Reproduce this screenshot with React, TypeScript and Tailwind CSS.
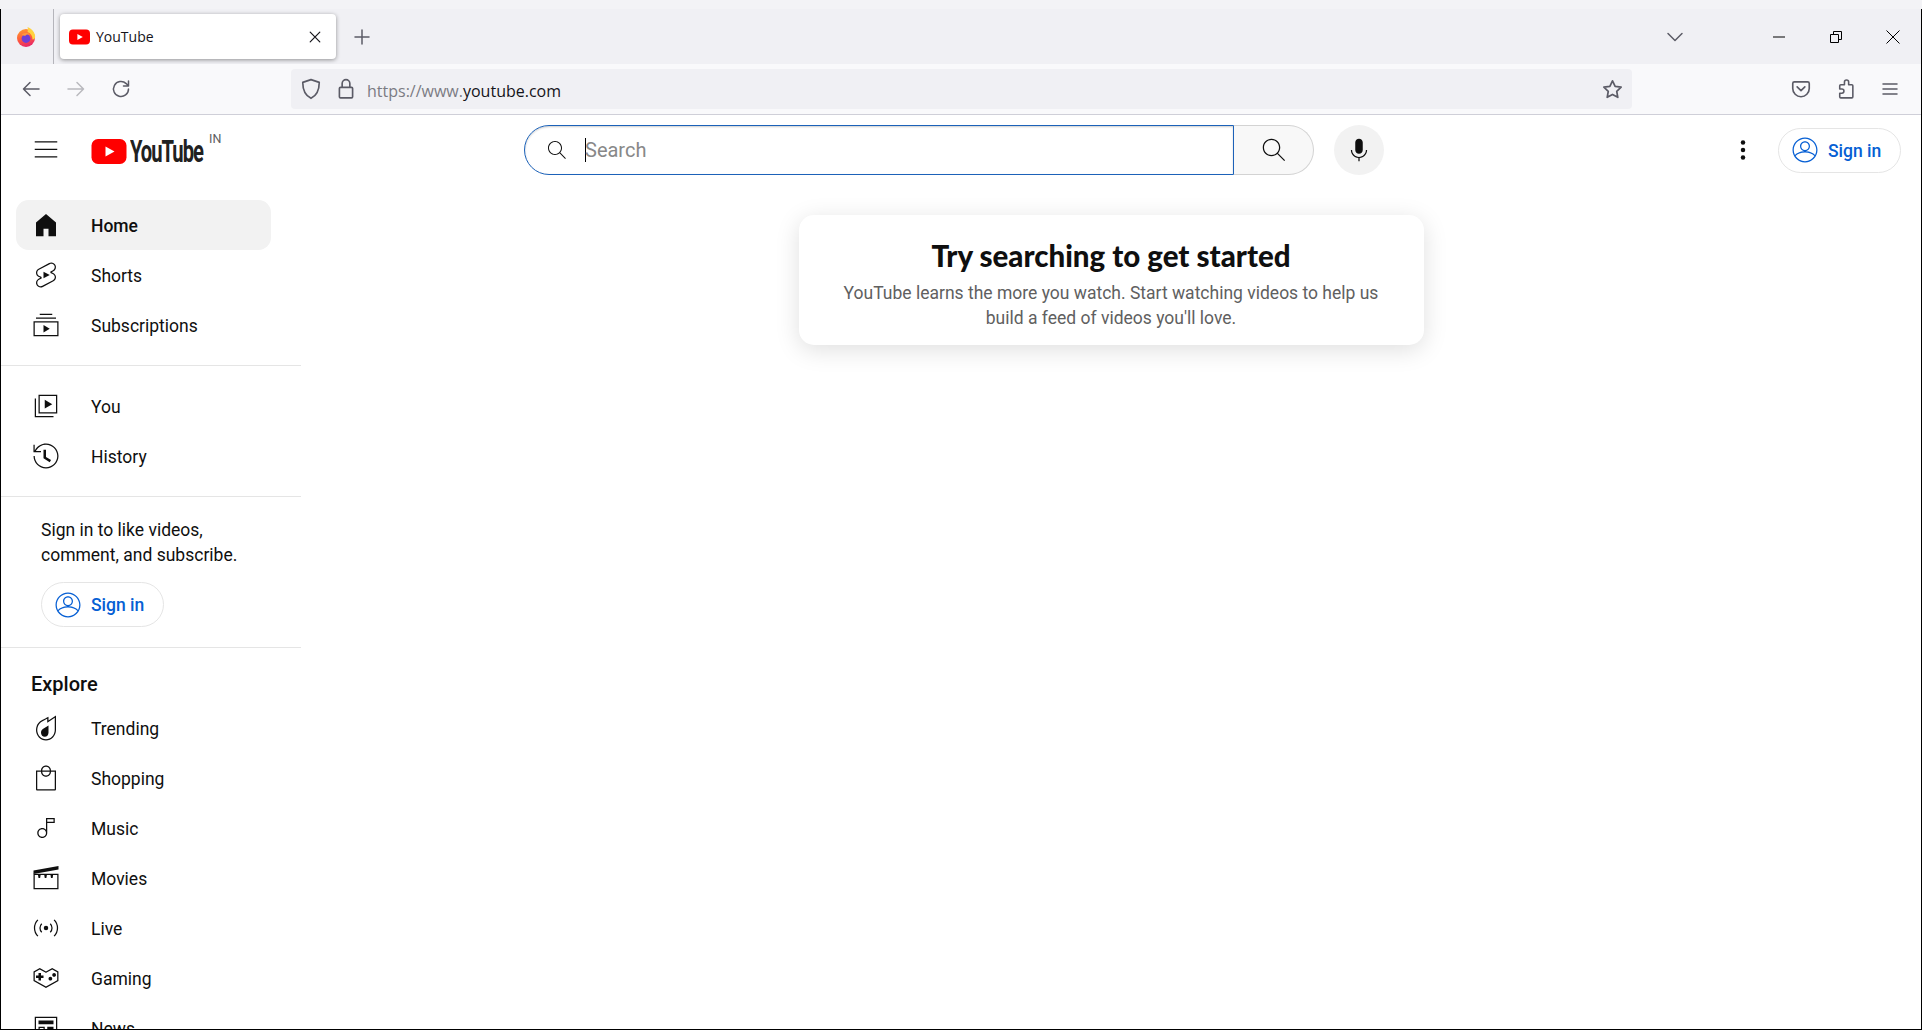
import React from "react";

const P: Record<string, string> = {
  menu: "M21 6H3V5h18v1zm0 5H3v1h18v-1zm0 6H3v1h18v-1z",
  home: "M4 21V10.08l8-6.96 8 6.96V21h-6v-6h-4v6H4z",
  shorts:
    "M10 14.65v-5.3L15 12l-5 2.65zm7.77-4.33-1.2-.5L18 9.06c1.84-.96 2.53-3.23 1.56-5.06s-3.24-2.53-5.07-1.56L6 6.94c-1.29.68-2.07 2.04-2 3.49.07 1.42.93 2.67 2.22 3.25.03.01 1.2.5 1.2.5L6 14.93c-1.83.97-2.53 3.24-1.56 5.07.97 1.83 3.24 2.53 5.07 1.56l8.5-4.5c1.29-.68 2.06-2.04 1.99-3.49-.07-1.42-.94-2.68-2.23-3.25zm-.23 5.86-8.5 4.5c-1.34.71-3.01.2-3.72-1.14-.71-1.34-.2-3.01 1.14-3.72l2.04-1.08v-1.21l-.69-.28-1.11-.46c-.99-.41-1.65-1.35-1.7-2.41-.05-1.06.52-2.06 1.46-2.56l8.5-4.5c1.34-.71 3.01-.2 3.72 1.14.71 1.34.2 3.01-1.14 3.72L15.5 9.26v1.21l1.8.74c.99.41 1.65 1.35 1.7 2.41.05 1.06-.52 2.06-1.46 2.56z",
  subs: "M10 18v-6l5 3-5 3zm7-15H7v1h10V3zm3 3H4v1h16V6zm2 3H2v12h20V9zM3 10h18v10H3V10z",
  you: "M11 7l6 3.5-6 3.5V7zm7 13H4V6H3v15h15v-1zm3-2H6V3h15v15zM7 17h13V4H7v13z",
  history:
    "M14.97 16.95 10 13.87V7h2v5.76l4.03 2.49-1.06 1.7zM22 12c0 5.51-4.49 10-10 10S2 17.51 2 12h1c0 4.96 4.04 9 9 9s9-4.04 9-9-4.04-9-9-9C8.81 3 5.92 4.64 4.28 7.38c-.11.18-.22.37-.31.56L3.94 8H8v1H1.96V3h1v4.74c.04-.09.07-.17.11-.25.11-.22.23-.42.35-.63C5.22 3.86 8.51 2 12 2c5.51 0 10 4.49 10 10z",
  trending:
    "M19 3.87v9.77C19 17.7 15.86 21 12 21s-7-3.3-7-7.37v-.13c0-1.06.22-2.13.62-3.09.5-1.19 1.29-2.21 2.27-2.97.85-.66 1.83-1.14 2.87-1.65.39-.19.77-.38 1.15-.58.36-.19.72-.38 1.08-.56v3.22l1.55-1.04L19 3.87M20 2l-6 4V3c-.85.44-1.7.88-2.55 1.33-1.41.74-2.9 1.34-4.17 2.32-1.13.87-2.02 2.05-2.58 3.37-.46 1.09-.7 2.29-.7 3.48v.14C4 18.26 7.58 22 12 22s8-3.74 8-8.36V2zM9.45 12.89 14 10v5.7c0 1.82-1.34 3.3-3 3.3s-3-1.47-3-3.3c0-1.19.58-2.23 1.45-2.81z",
  shopping:
    "M16 6c0-2.21-1.79-4-4-4S8 3.790 8 6H4v15c0 .55.45 1 1 1h14c.55 0 1-.45 1-1V6h-4zm-4-3c1.650 0 3 1.350 3 3H9c0-1.650 1.350-3 3-3zm7 18H5V7h3c0 2.210 1.790 4 4 4s4-1.790 4-4h3v14zM9 7h6c0 1.650-1.350 3-3 3S9 8.650 9 7z",
  music:
    "M12 4v9.38c-.73-.84-1.8-1.38-3-1.38-2.21 0-4 1.79-4 4s1.79 4 4 4 4-1.79 4-4V8h6V4h-7zM9 19c-1.66 0-3-1.34-3-3s1.34-3 3-3 3 1.34 3 3-1.34 3-3 3zm9-12h-5V5h5v2z",
  gaming:
    "M10 12H8v2H6v-2H4v-2h2V8h2v2h2v2zm7 .5c0-.83-.67-1.5-1.5-1.5s-1.5.67-1.5 1.5.67 1.5 1.5 1.5 1.5-.67 1.5-1.5zm3-3c0-.83-.67-1.5-1.5-1.5S17 8.67 17 9.5s.67 1.5 1.5 1.5 1.5-.67 1.5-1.5zm-3.03-4.35-4.5 2.53-.49.27-.49-.27-4.5-2.53L3 7.39v6.43l8.98 5.04 8.98-5.04-.01-6.43-3.98-2.24m0-1.15 4.98 2.8.01 7.6L11.98 20 2 14.4V6.8L7.02 4l4.96 2.8L16.97 4z",
  news: "M3 3h18v18H3V3zm1 1v16h16V4H4zm2 2h12v3H6V6zm0 5h5v7H6v-7zm1 1v5h3v-5H7zm6-1h5v2h-5v-2zm0 4h5v2h-5v-2z",
  search:
    "M20.87 20.17l-5.59-5.59C16.35 13.35 17 11.75 17 10c0-3.87-3.13-7-7-7s-7 3.13-7 7 3.13 7 7 7c1.75 0 3.35-.65 4.58-1.71l5.59 5.59.7-.71zM10 16c-3.31 0-6-2.69-6-6s2.69-6 6-6 6 2.69 6 6-2.69 6-6 6z",
  mic: "M12 3C10.34 3 9 4.37 9 6.07v5.86C9 13.63 10.34 15 12 15s3-1.37 3-3.07V6.07C15 4.37 13.66 3 12 3zM18.5 12h-1c0 3.03-2.47 5.5-5.5 5.5S6.5 15.03 6.5 12h-1c0 3.41 2.58 6.23 6 6.47V21h1v-2.53c3.42-.24 6-3.06 6-6.47z",
  account:
    "M12 2C6.48 2 2 6.48 2 12s4.48 10 10 10 10-4.48 10-10S17.52 2 12 2zm0 1c4.96 0 9 4.04 9 9 0 1.42-.34 2.76-.93 3.96-1.53-1.72-3.98-2.89-7.38-3.03C14.57 12.6 16 10.97 16 9c0-2.21-1.79-4-4-4S8 6.79 8 9c0 1.97 1.43 3.6 3.31 3.93-3.4.14-5.85 1.31-7.38 3.03C3.34 14.76 3 13.42 3 12c0-4.96 4.04-9 9-9zM9 9c0-1.65 1.35-3 3-3s3 1.35 3 3-1.35 3-3 3-3-1.35-3-3zm3 12c-3.16 0-5.94-1.64-7.55-4.12C6.01 14.93 8.61 13.9 12 13.9s5.99 1.03 7.55 2.98C17.94 19.36 15.16 21 12 21z",
};

function Yt({ name, className }: { name: string; className: string }) {
  return (
    <svg viewBox="0 0 24 24" className={className} fill="currentColor" fillRule="evenodd">
      <path d={P[name]} />
    </svg>
  );
}

function LiveIcon({ className }: { className: string }) {
  return (
    <svg viewBox="0 0 24 24" className={className} fill="none" stroke="currentColor" strokeWidth="1">
      <circle cx="12" cy="12" r="1.8" fill="currentColor" stroke="none" />
      <path d="M8.6 8.6a4.8 4.8 0 0 0 0 6.8M15.4 8.6a4.8 4.8 0 0 1 0 6.8M5.5 5.5a9.2 9.2 0 0 0 0 13M18.5 5.5a9.2 9.2 0 0 1 0 13" />
    </svg>
  );
}

function MoviesIcon({ className }: { className: string }) {
  return (
    <svg viewBox="0 0 24 24" className={className} fill="currentColor">
      <path d="M2 6 22 2.300V5.200L2 8.800z" />
      <path fillRule="evenodd" d="M2 8.500h20V21H2zM3 9.500V20h18V9.500z" />
      <path d="M5.500 9h2.300l-.5 3H6zM10.500 9h2.300l-.5 3H11zM15.500 9h2.300l-.5 3H16z" />
    </svg>
  );
}

function Row({ icon, label, active, bold }: { icon: string; label: string; active?: boolean; bold?: boolean }) {
  const cls = "mr-[30px] h-[30px] w-[30px] shrink-0";
  return (
    <div
      className={`ml-[15px] flex h-[50px] w-[255px] shrink-0 items-center rounded-[12.5px] pl-[15px] text-[17.5px] text-[#0f0f0f] ${
        active ? "bg-[#f2f2f2]" : ""
      } ${bold ? "font-medium" : ""}`}
    >
      {icon === "live" ? (
        <LiveIcon className={cls} />
      ) : icon === "movies" ? (
        <MoviesIcon className={cls} />
      ) : (
        <Yt name={icon} className={cls} />
      )}
      <span className="pt-[2px]">{label}</span>
    </div>
  );
}

function SignIn({ className }: { className: string }) {
  return (
    <div
      className={`flex h-[45px] w-[123px] items-center rounded-full border border-[#e5e5e5] pl-[11px] text-[17.5px] font-medium text-[#065fd4] ${className}`}
    >
      <Yt name="account" className="mr-[8px] h-[30px] w-[30px] shrink-0" />
      <span className="pt-[2px]">Sign in</span>
    </div>
  );
}

function YtLogoMark({ className }: { className: string }) {
  return (
    <svg viewBox="0 0 35 25" className={className}>
      <rect x="0" y="0" width="35" height="25" rx="6.5" fill="#ff0000" />
      <path d="M14 7.5 23 12.5 14 17.5z" fill="#fff" />
    </svg>
  );
}

function Firefox() {
  return (
    <svg viewBox="0 0 20 20" className="h-[20px] w-[20px]">
      <defs>
        <linearGradient id="ffa" x1="0.2" y1="0" x2="0.5" y2="1">
          <stop offset="0" stopColor="#ff9b2f" />
          <stop offset="0.55" stopColor="#ff5a3c" />
          <stop offset="1" stopColor="#e6256a" />
        </linearGradient>
      </defs>
      <circle cx="10" cy="11" r="9" fill="url(#ffa)" />
      <path d="M11.500 0c3.500 1.500 6.500 4 7.500 8 .6 3-.6 4.500-2.500 4.500 0-4-2-6.500-5-7.500C12 3.500 12 1.500 11.500 0z" fill="#ffd23f" />
      <circle cx="10" cy="11.500" r="4.400" fill="#6f3fd6" />
      <path d="M5.500 8c2-2.500 6.500-3 9 0-2-.8-4.500-.5-5 .8-1.200-.2-3-.3-4-.8z" fill="#ff9a3c" />
    </svg>
  );
}

const stroke = { fill: "none", strokeWidth: 1.5, strokeLinecap: "round" as const, strokeLinejoin: "round" as const };

function Chrome({ d, className, color }: { d: string; className: string; color?: string }) {
  return (
    <svg viewBox="0 0 20 20" className={className} {...stroke} stroke={color ?? "#5b5b66"}>
      <path d={d} />
    </svg>
  );
}

export default function App() {
  return (
    <div className="flex h-[1030px] w-[1922px] flex-col overflow-hidden bg-[#f3f3f6] font-['Roboto',sans-serif] text-[#0f0f0f]">
      <div className="h-[9px] shrink-0" />
      <div className="flex min-h-0 flex-1 flex-col border-x border-b border-black">
        {/* Tab strip */}
        <div className="flex h-[55px] shrink-0 items-center bg-[#f0f0f4] text-[#15141a]">
          <div className="flex h-full w-[53px] shrink-0 items-center justify-center border-r border-[#b5b5bb] pr-[3px]">
            <Firefox />
          </div>
          <div className="ml-[6px] flex h-[45px] w-[276px] shrink-0 items-center rounded-[4px] bg-white pl-[9px] pr-[13px] shadow-[0_1px_4px_rgba(0,0,0,0.4)]">
            <YtLogoMark className="h-[16px] w-[21px] shrink-0" />
            <span className="ml-[6px] flex-1 font-['Open_Sans',sans-serif] text-[14px] text-[#15141a]">YouTube</span>
            <Chrome d="M4 4l12 12M16 4L4 16" className="h-[16px] w-[16px]" color="#15141a" />
          </div>
          <Chrome d="M10 3v14M3 10h14" className="ml-[16px] h-[20px] w-[20px]" />
          <div className="flex-1" />
          <Chrome d="M3 6.500l7 7 7-7" className="mr-[88px] h-[20px] w-[20px]" />
          <svg viewBox="0 0 12 12" className="mr-[45px] h-[12px] w-[12px]" fill="none" stroke="#000" strokeWidth="1">
            <path d="M0 6h12" />
          </svg>
          <svg viewBox="0 0 12 12" className="mr-[44px] h-[12px] w-[12px]" fill="none" stroke="#000" strokeWidth="1">
            <path d="M.5 3.500h8v8h-8zM3.500 3.500v-3h8v8h-3" />
          </svg>
          <svg viewBox="0 0 14 14" className="mr-[21px] h-[14px] w-[14px]" fill="none" stroke="#000" strokeWidth="1">
            <path d="M.5.500l13 13M13.500.500l-13 13" />
          </svg>
        </div>

        {/* Toolbar */}
        <div className="flex h-[51px] shrink-0 items-center border-b border-[#cfcfd8] bg-[#f9f9fb]">
          <Chrome d="M18 10H2.500M9 3.500 2.500 10 9 16.500" className="ml-[20px] h-[20px] w-[20px]" />
          <Chrome d="M2 10h15.500M11 3.500l6.500 6.500-6.500 6.500" className="ml-[25px] h-[20px] w-[20px]" color="#b9b9be" />
          <Chrome d="M17.500 10a7.500 7.500 0 1 1-2.300-5.400L17.500 7M17.500 2v5H12.500" className="ml-[25px] h-[20px] w-[20px]" />
          <div className="ml-[160px] flex h-[40px] w-[1341px] shrink-0 items-center rounded-[4px] bg-[#f0f0f4] pl-[9px] pr-[8px]">
            <Chrome d="M10 1.500 17.500 4c0 7-1.800 11.500-7.500 14.500C4.300 15.500 2.500 11 2.500 4z" className="h-[22px] w-[22px]" />
            <Chrome d="M5 8.500h10a1 1 0 0 1 1 1V17a1 1 0 0 1-1 1H5a1 1 0 0 1-1-1V9.500a1 1 0 0 1 1-1zM6.500 8.500V5a3.500 3.500 0 0 1 7 0v3.500" className="ml-[13px] h-[22px] w-[22px]" />
            <span className="ml-[10px] flex-1 pt-[3px] font-['Open_Sans',sans-serif] text-[16px] text-[#7b7b83]">
              https://www.<span className="text-[#15141a]">youtube.com</span>
            </span>
            <Chrome d="M10 2.500l2.300 4.800 5.200.700-3.800 3.600.9 5.200-4.600-2.500-4.600 2.500.9-5.200L2.500 8l5.200-.700z" className="h-[23px] w-[23px]" />
          </div>
          <Chrome d="M4 3.500h12a1.500 1.500 0 0 1 1.500 1.500v4.500a7.500 7.500 0 0 1-15 0V5A1.500 1.500 0 0 1 4 3.500zM6.500 8l3.500 3.500L13.500 8" className="ml-[158px] h-[22px] w-[22px]" />
          <Chrome d="M9 3a2 2 0 0 1 4 0v2.500h3a1 1 0 0 1 1 1V17a1 1 0 0 1-1 1H5.500a1 1 0 0 1-1-1v-3.500h2a2 2 0 0 0 0-4h-2V6.500a1 1 0 0 1 1-1H9z" className="ml-[23px] h-[21px] w-[21px]" />
          <Chrome d="M3 5h14M3 10h14M3 15h14" className="ml-[24px] h-[20px] w-[20px]" />
        </div>

        {/* Page */}
        <div className="flex min-h-0 flex-1 flex-col bg-white">
          <header className="flex h-[70px] shrink-0 items-center">
            <div className="flex h-full w-[523px] shrink-0 items-center">
              <Yt name="menu" className="ml-[30px] h-[30px] w-[30px]" />
              <div className="relative ml-[30px] mt-[2px] flex items-center">
                <YtLogoMark className="h-[25px] w-[36px] shrink-0" />
                <span className="ml-[3px] w-[72px] origin-left scale-x-[0.65] whitespace-nowrap text-[31px] font-bold leading-[25px] tracking-[-1.500px] text-[#212121]">
                  YouTube
                </span>
                <span className="absolute left-[118px] top-[-7px] text-[12.500px] leading-[14px] text-[#606060]">IN</span>
              </div>
            </div>
            <div className="flex h-[50px] w-[710px] shrink-0 items-center rounded-l-full border border-[#1c62b9] pl-[20px] shadow-[inset_0_1px_2px_rgba(0,0,0,0.2)]">
              <Yt name="search" className="h-[24px] w-[24px] shrink-0 text-[#0f0f0f]" />
              <div className="ml-[16px] h-[24px] w-px bg-black" />
              <span className="-ml-px text-[20px] text-[#888888]">Search</span>
            </div>
            <div className="flex h-[50px] w-[80px] shrink-0 items-center justify-center rounded-r-full border border-l-0 border-[#d3d3d3] bg-[#f8f8f8]">
              <Yt name="search" className="h-[30px] w-[30px]" />
            </div>
            <div className="ml-[20px] flex h-[50px] w-[50px] shrink-0 items-center justify-center rounded-full bg-[#f2f2f2]">
              <Yt name="mic" className="h-[30px] w-[30px]" />
            </div>
            <div className="ml-auto flex items-center pr-[20px]">
              <svg viewBox="0 0 24 24" className="mr-[20px] h-[30px] w-[30px]" fill="currentColor">
                <circle cx="12" cy="6" r="1.800" />
                <circle cx="12" cy="12" r="1.800" />
                <circle cx="12" cy="18" r="1.800" />
              </svg>
              <SignIn className="" />
            </div>
          </header>

          <div className="flex min-h-0 flex-1 overflow-hidden">
            <aside className="flex w-[300px] shrink-0 flex-col pt-[15px]">
              <div className="pb-[15px]">
                <Row icon="home" label="Home" active bold />
                <Row icon="shorts" label="Shorts" />
                <Row icon="subs" label="Subscriptions" />
              </div>
              <div className="shrink-0 border-t border-[#e5e5e5] py-[15px]">
                <Row icon="you" label="You" />
                <Row icon="history" label="History" />
              </div>
              <div className="shrink-0 border-t border-[#e5e5e5] pb-[20px] pl-[40px] pt-[20px]">
                <p className="pt-[1px] text-[17.500px] leading-[25px] text-[#0f0f0f] -mb-[1px]">
                  Sign in to like videos,
                  <br />
                  comment, and subscribe.
                </p>
                <SignIn className="mt-[15px]" />
              </div>
              <div className="shrink-0 border-t border-[#e5e5e5]">
                <h3 className="pb-[6px] pl-[30px] pt-[24px] text-[20px] font-medium leading-[25px]">Explore</h3>
                <Row icon="trending" label="Trending" />
                <Row icon="shopping" label="Shopping" />
                <Row icon="music" label="Music" />
                <Row icon="movies" label="Movies" />
                <Row icon="live" label="Live" />
                <Row icon="gaming" label="Gaming" />
                <Row icon="news" label="News" />
              </div>
            </aside>
            <main className="flex-1 pt-[30px]">
              <div className="mx-auto flex h-[130px] w-[625px] flex-col items-center rounded-[15px] bg-white pt-[22px] shadow-[0_5px_25px_rgba(0,0,0,0.13)]">
                <h2 className="font-['Lato',sans-serif] text-[29.500px] font-black leading-[38px] text-[#0f0f0f]">
                  Try searching to get started
                </h2>
                <p className="mt-[6px] text-center text-[17.500px] leading-[25px] text-[#606060]">
                  YouTube learns the more you watch. Start watching videos to help us
                  <br />
                  build a feed of videos you'll love.
                </p>
              </div>
            </main>
          </div>
        </div>
      </div>
    </div>
  );
}
